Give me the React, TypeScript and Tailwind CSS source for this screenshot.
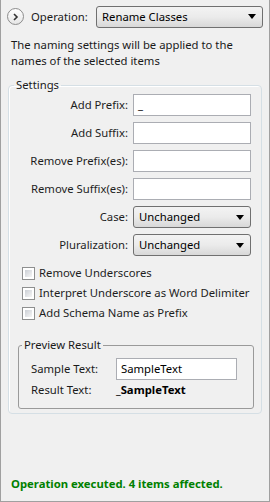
const font = { fontFamily: '"Noto Sans", "Open Sans", sans-serif' };

function TextBox({ value, width = "w-[118px]" }: { value?: string; width?: string }) {
  return (
    <div className={`${width} h-[22px] border border-[#abadb3] bg-white px-[4px] flex items-center text-black`}>
      {value}
    </div>
  );
}

function Combo({ value, className = "" }: { value: string; className?: string }) {
  return (
    <div
      className={`h-[22px] border border-[#707070] rounded-[3px] bg-gradient-to-b from-[#f3f3f3] via-[#ebebeb] to-[#d8d8d8] flex items-center justify-between pl-[5px] pr-[6px] text-black ${className}`}
    >
      <span>{value}</span>
      <svg width="8" height="5" viewBox="0 0 8 5">
        <path d="M0 0 H8 L4 5 Z" fill="#000" />
      </svg>
    </div>
  );
}

function Row({ label, children }: { label: string; children: React.ReactNode }) {
  return (
    <div className="flex items-center h-[22px]">
      <div className="w-[120px] text-right pr-[5px] text-[#1e1e1e]">{label}</div>
      {children}
    </div>
  );
}

function Check({ label }: { label: string }) {
  return (
    <div className="flex items-center h-[20px] gap-[4px] text-[#1e1e1e] whitespace-nowrap">
      <div className="w-[13px] h-[13px] border border-[#8e8f8f] bg-white p-[2px] shrink-0">
        <div className="w-full h-full bg-gradient-to-br from-[#cbcfd5] to-[#f6f6f6]" />
      </div>
      <span>{label}</span>
    </div>
  );
}

export default function App() {
  return (
    <div
      style={font}
      className="w-[270px] h-[502px] bg-[#f0f0f0] border-l border-r border-b border-[#a0a0a0] flex flex-col text-[11.3px] text-[#1a1a1a] leading-[16px]"
    >
      <div className="flex items-center pl-[6px] pr-[6px] pt-[6px] h-[27px]">
        <div className="w-[17px] h-[17px] rounded-full border border-[#8c8c8c] bg-gradient-to-b from-white to-[#e6e6e6] flex items-center justify-center">
          <svg width="7" height="8" viewBox="0 0 7 8">
            <path d="M2 1 L5 4 L2 7" stroke="#333" strokeWidth="1.6" fill="none" />
          </svg>
        </div>
        <span className="ml-[7px] w-[65px]">Operation:</span>
        <Combo value="Rename Classes" className="flex-1 h-[21px]" />
      </div>

      <p className="px-[10px] mt-[10px]">
        The naming settings will be applied to the names of the selected items
      </p>

      <fieldset className="mx-[7px] mt-[9px] border border-[#d5dfe5] rounded-[4px] shadow-[inset_1px_1px_0_#fff] pl-[4px] pr-[2px] pb-[4px]">
        <legend className="ml-[1px] px-[2px] leading-[14px]">Settings</legend>
        <div className="flex flex-col gap-[6px] mt-[2px]">
          <Row label="Add Prefix:">
            <TextBox value="_" />
          </Row>
          <Row label="Add Suffix:">
            <TextBox />
          </Row>
          <Row label="Remove Prefix(es):">
            <TextBox />
          </Row>
          <Row label="Remove Suffix(es):">
            <TextBox />
          </Row>
          <Row label="Case:">
            <Combo value="Unchanged" className="w-[118px]" />
          </Row>
          <Row label="Pluralization:">
            <Combo value="Unchanged" className="w-[118px]" />
          </Row>
        </div>
        <div className="flex flex-col pl-[9px] mt-[7px]">
          <Check label="Remove Underscores" />
          <Check label="Interpret Underscore as Word Delimiter" />
          <Check label="Add Schema Name as Prefix" />
        </div>

        <fieldset className="mx-[5px] mt-[15px] border border-[#9a9a9a] rounded-[3px] px-[12px] pb-[10px]">
          <legend className="ml-[-9px] px-[2px] leading-[14px]">Preview Result</legend>
          <div className="flex items-center mt-[6px]">
            <span className="w-[85px]">Sample Text:</span>
            <TextBox value="SampleText" width="w-[121px]" />
          </div>
          <div className="flex items-center mt-[2px]">
            <span className="w-[85px]">Result Text:</span>
            <span className="font-bold text-black">_SampleText</span>
          </div>
        </fieldset>
      </fieldset>

      <div className="mt-auto px-[10px] pb-[9px] font-bold text-[#008000]">
        Operation executed. 4 items affected.
      </div>
    </div>
  );
}
